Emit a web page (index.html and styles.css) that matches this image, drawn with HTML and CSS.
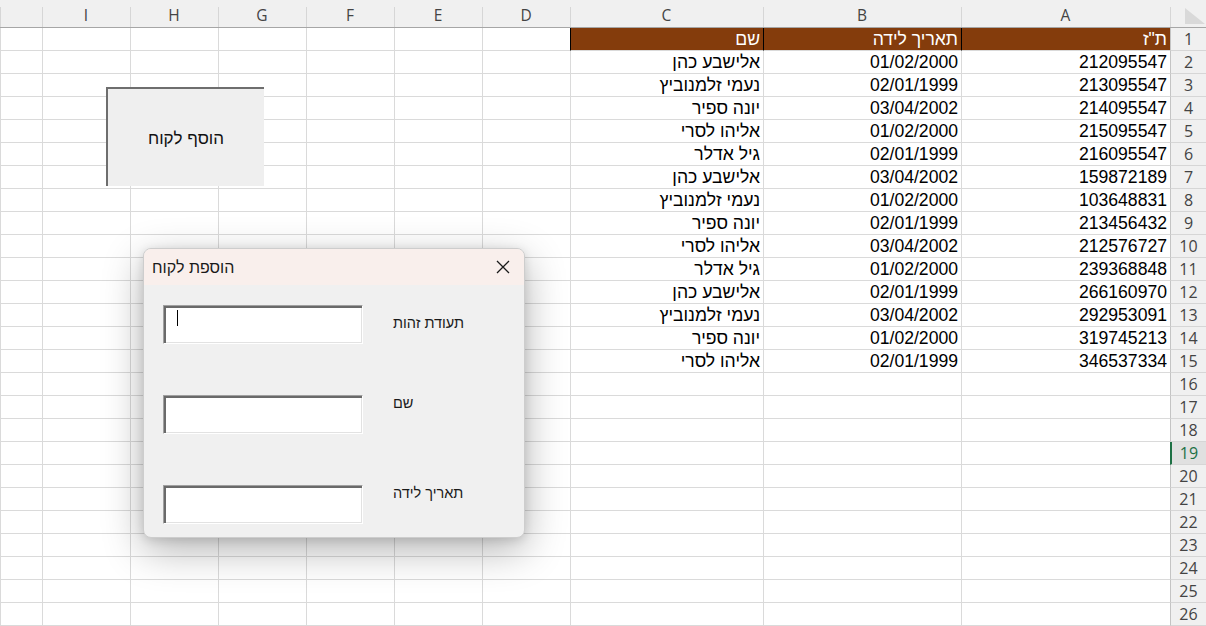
FILE: index.html
```html
<!DOCTYPE html>
<html lang="he">
<head>
<meta charset="utf-8">
<title>Sheet</title>
<link rel="stylesheet" href="styles.css">
</head>
<body>
<div class="sheet">
  <div class="colhead">
    <div class="corner"><svg width="22" height="18" viewBox="0 0 22 18"><polygon points="1,1 1,17 21,17" fill="#d9d9d9"/></svg></div>
    <div>A</div><div>B</div><div>C</div><div>D</div><div>E</div><div>F</div><div>G</div><div>H</div><div>I</div><div></div>
  </div>
  <div class="row"><div class="rh">1</div><div class="hd">ת"ז</div><div class="hd">תאריך לידה</div><div class="hd">שם</div><div></div><div></div><div></div><div></div><div></div><div></div><div></div></div>
  <div class="row"><div class="rh">2</div><div>212095547</div><div>01/02/2000</div><div>אלישבע כהן</div><div></div><div></div><div></div><div></div><div></div><div></div><div></div></div>
  <div class="row"><div class="rh">3</div><div>213095547</div><div>02/01/1999</div><div>נעמי זלמנוביץ</div><div></div><div></div><div></div><div></div><div></div><div></div><div></div></div>
  <div class="row"><div class="rh">4</div><div>214095547</div><div>03/04/2002</div><div>יונה ספיר</div><div></div><div></div><div></div><div></div><div></div><div></div><div></div></div>
  <div class="row"><div class="rh">5</div><div>215095547</div><div>01/02/2000</div><div>אליהו לסרי</div><div></div><div></div><div></div><div></div><div></div><div></div><div></div></div>
  <div class="row"><div class="rh">6</div><div>216095547</div><div>02/01/1999</div><div>גיל אדלר</div><div></div><div></div><div></div><div></div><div></div><div></div><div></div></div>
  <div class="row"><div class="rh">7</div><div>159872189</div><div>03/04/2002</div><div>אלישבע כהן</div><div></div><div></div><div></div><div></div><div></div><div></div><div></div></div>
  <div class="row"><div class="rh">8</div><div>103648831</div><div>01/02/2000</div><div>נעמי זלמנוביץ</div><div></div><div></div><div></div><div></div><div></div><div></div><div></div></div>
  <div class="row"><div class="rh">9</div><div>213456432</div><div>02/01/1999</div><div>יונה ספיר</div><div></div><div></div><div></div><div></div><div></div><div></div><div></div></div>
  <div class="row"><div class="rh">10</div><div>212576727</div><div>03/04/2002</div><div>אליהו לסרי</div><div></div><div></div><div></div><div></div><div></div><div></div><div></div></div>
  <div class="row"><div class="rh">11</div><div>239368848</div><div>01/02/2000</div><div>גיל אדלר</div><div></div><div></div><div></div><div></div><div></div><div></div><div></div></div>
  <div class="row"><div class="rh">12</div><div>266160970</div><div>02/01/1999</div><div>אלישבע כהן</div><div></div><div></div><div></div><div></div><div></div><div></div><div></div></div>
  <div class="row"><div class="rh">13</div><div>292953091</div><div>03/04/2002</div><div>נעמי זלמנוביץ</div><div></div><div></div><div></div><div></div><div></div><div></div><div></div></div>
  <div class="row"><div class="rh">14</div><div>319745213</div><div>01/02/2000</div><div>יונה ספיר</div><div></div><div></div><div></div><div></div><div></div><div></div><div></div></div>
  <div class="row"><div class="rh">15</div><div>346537334</div><div>02/01/1999</div><div>אליהו לסרי</div><div></div><div></div><div></div><div></div><div></div><div></div><div></div></div>
  <div class="row"><div class="rh">16</div><div></div><div></div><div></div><div></div><div></div><div></div><div></div><div></div><div></div><div></div></div>
  <div class="row"><div class="rh">17</div><div></div><div></div><div></div><div></div><div></div><div></div><div></div><div></div><div></div><div></div></div>
  <div class="row"><div class="rh">18</div><div></div><div></div><div></div><div></div><div></div><div></div><div></div><div></div><div></div><div></div></div>
  <div class="row"><div class="rh sel">19</div><div></div><div></div><div></div><div></div><div></div><div></div><div></div><div></div><div></div><div></div></div>
  <div class="row"><div class="rh">20</div><div></div><div></div><div></div><div></div><div></div><div></div><div></div><div></div><div></div><div></div></div>
  <div class="row"><div class="rh">21</div><div></div><div></div><div></div><div></div><div></div><div></div><div></div><div></div><div></div><div></div></div>
  <div class="row"><div class="rh">22</div><div></div><div></div><div></div><div></div><div></div><div></div><div></div><div></div><div></div><div></div></div>
  <div class="row"><div class="rh">23</div><div></div><div></div><div></div><div></div><div></div><div></div><div></div><div></div><div></div><div></div></div>
  <div class="row"><div class="rh">24</div><div></div><div></div><div></div><div></div><div></div><div></div><div></div><div></div><div></div><div></div></div>
  <div class="row"><div class="rh">25</div><div></div><div></div><div></div><div></div><div></div><div></div><div></div><div></div><div></div><div></div></div>
  <div class="row"><div class="rh">26</div><div></div><div></div><div></div><div></div><div></div><div></div><div></div><div></div><div></div><div></div></div>
</div>

<div class="sheet-button">הוסף לקוח</div>

<div class="dialog">
  <div class="titlebar">
    <span class="title">הוספת לקוח</span>
    <svg class="close" width="14" height="14" viewBox="0 0 14 14"><path d="M1 1 L13 13 M13 1 L1 13" stroke="#1a1a1a" stroke-width="1.3" fill="none"/></svg>
  </div>
  <div class="dbody">
    <div class="field">
      <div class="tbox"><span class="caret"></span></div>
      <div class="label label-first">תעודת זהות</div>
    </div>
    <div class="field">
      <div class="tbox"></div>
      <div class="label">שם</div>
    </div>
    <div class="field">
      <div class="tbox"></div>
      <div class="label">תאריך לידה</div>
    </div>
  </div>
</div>
</body>
</html>
```

FILE: styles.css
```css
* { box-sizing: border-box; margin: 0; padding: 0; }

html, body { width: 1206px; height: 626px; overflow: hidden; }

body {
  position: relative;
  background: #ffffff;
  font-family: "Liberation Sans", Arial, sans-serif;
  color: #000;
}

.sheet { direction: rtl; }

.colhead,
.row {
  display: grid;
  grid-template-columns: 36px 209px 198px 193px repeat(6, 88px) 42px;
}

.colhead {
  height: 28px;
  background: #f0f0f0;
  border-bottom: 1px solid #a6a6a6;
}

.colhead > div {
  position: relative;
  text-align: center;
  font-family: "Open Sans", "Noto Sans", sans-serif;
  font-size: 15.5px;
  line-height: 24px;
  padding-top: 3px;
  color: #444;
}

.colhead > div::before {
  content: "";
  position: absolute;
  left: 0;
  top: 7px;
  bottom: 0;
  border-left: 1px solid #d6d6d6;
}

.colhead > .corner { padding-top: 7px; text-align: left; padding-left: 2px; }
.colhead > .corner svg { display: block; }

.row { height: 23px; }

.row > div {
  border-left: 1px solid #dadada;
  border-bottom: 1px solid #dadada;
  font-size: 17.6px;
  line-height: 22px;
  padding: 0 3px;
  white-space: nowrap;
  overflow: hidden;
}

.row > .rh {
  background: #f0f0f0;
  border-left-color: #c4c4c4;
  border-bottom-color: #d6d6d6;
  text-align: center;
  padding: 0;
  font-family: "Open Sans", "Noto Sans", sans-serif;
  font-size: 16px;
  color: #444;
}

.row > .rh.sel {
  background: #e0e0e0;
  border-left: 2px solid #1e7145;
  color: #1e7145;
}

.row > .hd {
  background: #843c0c;
  color: #ffffff;
  border-left-color: #000;
}

/* floating form-control button on the sheet */
.sheet-button {
  position: absolute;
  left: 106px;
  top: 87px;
  width: 158px;
  height: 99px;
  background: #efefef;
  border-left: 2px solid #6e6e6e;
  border-top: 2px solid #6e6e6e;
  display: flex;
  align-items: center;
  justify-content: center;
  font-size: 17px;
  padding-top: 2px;
  color: #111;
}

/* user form dialog */
.dialog {
  position: absolute;
  left: 143px;
  top: 248px;
  width: 382px;
  height: 290px;
  border: 1px solid #cdcdcd;
  border-radius: 8px;
  background: #f0f0f0;
  overflow: hidden;
  box-shadow: 0 12px 40px rgba(0, 0, 0, 0.3), 0 2px 10px rgba(0, 0, 0, 0.12);
}

.titlebar {
  height: 36px;
  background: #f9efec;
  display: flex;
  align-items: center;
  justify-content: space-between;
  padding: 0 14px 0 8px;
}

.title {
  font-size: 16px;
  color: #1a1a1a;
  padding-top: 2px;
}

.close { display: block; }

.dbody {
  padding: 20px 0 0 19px;
  display: flex;
  flex-direction: column;
  gap: 51px;
}

.field {
  display: flex;
  align-items: flex-start;
}

.tbox {
  width: 200px;
  height: 39px;
  background: #fff;
  border-top: 1px solid #a0a0a0;
  border-left: 1px solid #a0a0a0;
  border-right: 1px solid #ffffff;
  border-bottom: 1px solid #ffffff;
  box-shadow: inset 2px 2px 0 #6a6a6a, inset -1px -1px 0 #e2e2e2;
  padding: 4px 0 0 13px;
}

.caret {
  display: block;
  width: 1px;
  height: 16px;
  background: #000;
}

.label {
  margin-left: 30px;
  font-size: 14.5px;
  line-height: 16px;
  padding-top: 0;
  color: #1a1a1a;
}

.label-first { padding-top: 10px; }
```
